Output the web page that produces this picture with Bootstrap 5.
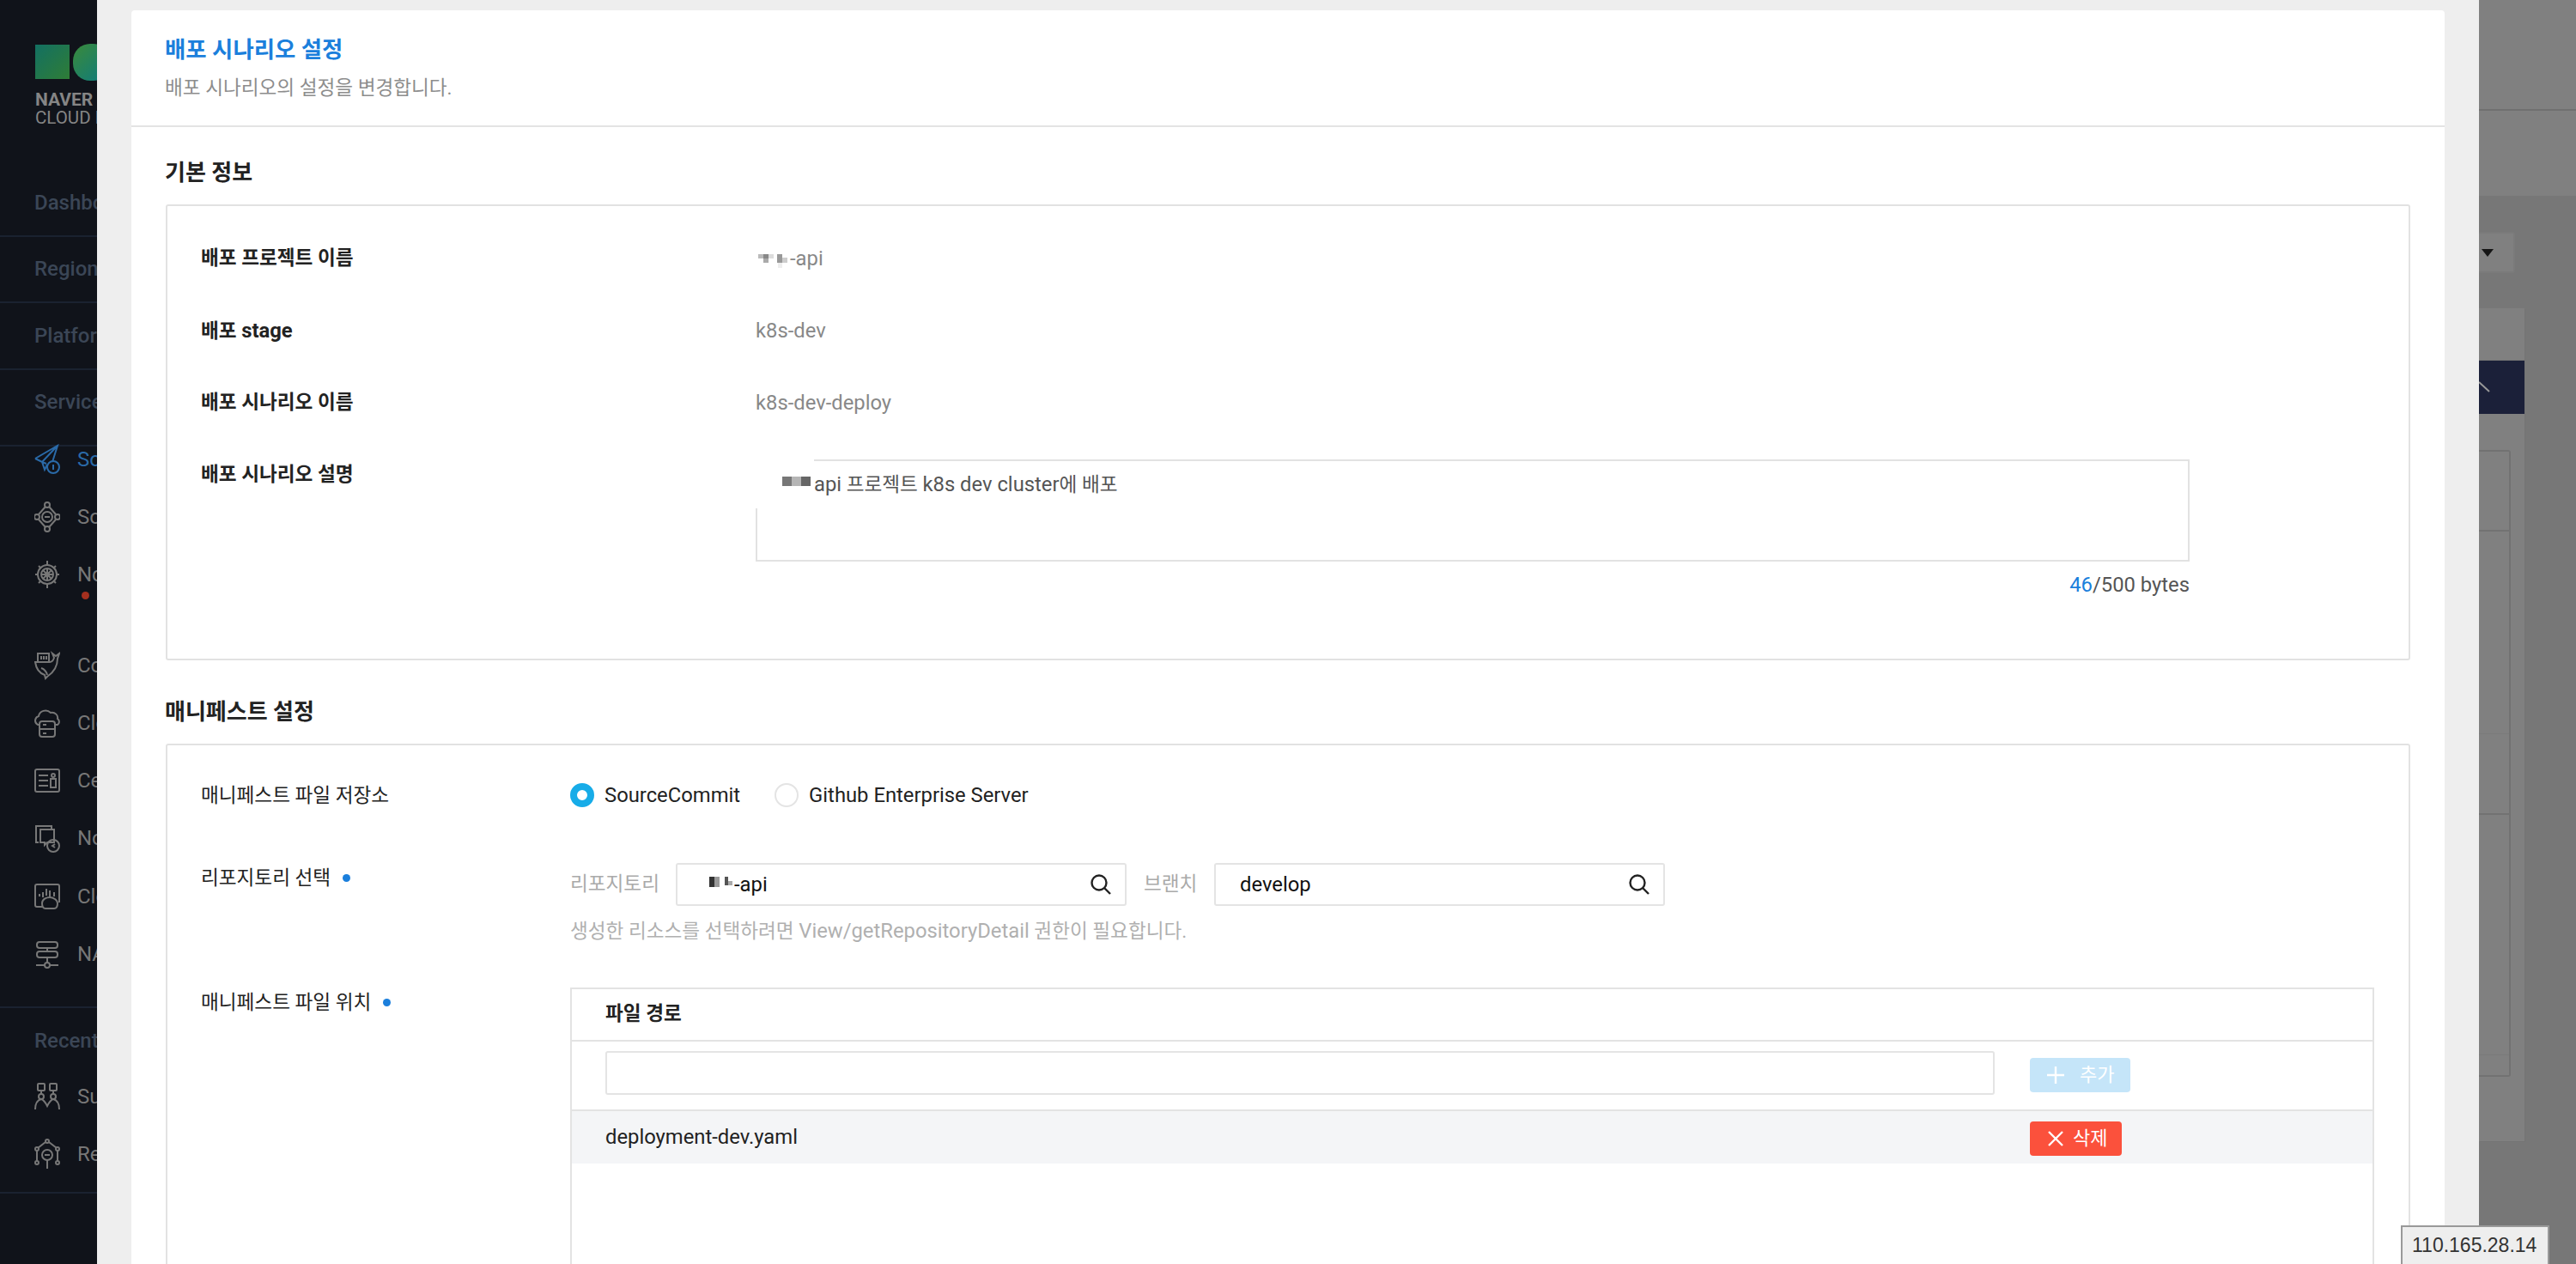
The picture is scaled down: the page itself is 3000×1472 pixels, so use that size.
<!DOCTYPE html>
<html lang="ko">
<head>
<meta charset="utf-8">
<title>배포 시나리오 설정</title>
<link href="https://cdn.jsdelivr.net/npm/bootstrap@5.3.0/dist/css/bootstrap.min.css" rel="stylesheet">
<style>
html,body{margin:0;height:1472px;overflow:hidden;background:#777}
body{font-family:Roboto,"Noto Sans CJK KR",sans-serif;font-size:22.6px;color:#222}
.en{font-size:23.8px}
.stage{height:1472px;overflow:hidden}
.side{width:113px;flex:none;background:#10131a;overflow:hidden;white-space:nowrap}
.logo-box{height:198px;padding:51px 0 0 41px}
.logo-box svg{display:block}
.logo-t{font-size:20.5px;line-height:21px;color:#858585}
.logo-t.one{font-size:21px;font-weight:700;margin-top:11px}
.sec{height:77.5px;border-bottom:2px solid #1a2230;padding-left:40px;font-size:24px;font-weight:500;color:#3b4656;display:flex;align-items:center}
.sec.nob{border:0}
.sec.tall{height:89px;padding-bottom:12px}
.sec.rec{height:76px}
.side-list{margin-top:-3px;height:657px;border-bottom:2px solid #1a2230}
.side-list.sec2{height:auto;padding-bottom:26px;margin-top:9px}
.nav-i{height:36px;margin-bottom:31.2px;padding-left:40px;display:flex;align-items:center;gap:20px;font-size:24px;color:#777;position:relative}
.nav-i svg{width:30px;height:36px;flex:none;stroke:#777;fill:none;stroke-width:2}
.nav-i.on{color:#2a6aa8}
.nav-i.on svg{stroke:#2a6aa8}
.nav-i.gap{margin-bottom:70px}
.nav-i.end{margin-bottom:0}
.red-dot{position:absolute;left:95px;top:38px;width:9px;height:9px;border-radius:50%;background:#a5301f}
.sheet{width:2774px;flex:none;background:#eee;padding:12px 40px 0}
.sheet-head{height:136px;background:#fff;border-bottom:2px solid #e4e4e4;border-radius:4px 4px 0 0;padding:31px 39px 0}
.sheet-title{font-size:26.4px;line-height:30px;font-weight:700;color:#1b7fdc;margin:0 0 15px}
.sheet-sub{line-height:30px;color:#8d8d8d;margin:0}
.sheet-body{background:#fff;height:1400px;padding:38px 40px 0}
.sec-h{font-size:26px;line-height:30px;font-weight:700;color:#222;margin:0 0 22px -1px}
.box-a{border:2px solid #e2e2e2;border-radius:3px;padding:46px 39px 71px;margin-bottom:45px}
.info-row{display:flex;margin-bottom:53.5px;line-height:30px}
.info-row.last{margin-bottom:0}
.info-k{width:646px;flex:none;font-weight:700}
.info-v{color:#888;display:flex;align-items:center}
.info-v svg{margin-top:5px}
.wide{width:1670px}
.area{height:119px;margin-top:-3px;border:2px solid #e2e2e2;padding:12px 0 0 66px;line-height:30px;color:#555;position:relative;white-space:nowrap}
.area-patch{position:absolute;left:-2px;top:-2px;width:68px;height:57px;background:#fff}
.area-txt{position:relative}
.area-txt svg{position:absolute;left:-37px;top:4px}
.count{text-align:right;margin-top:12px;color:#555}
.count b{font-weight:400;color:#1b7fdc}
.box-b{border:2px solid #e2e2e2;border-radius:3px;padding:43px 39px 0;height:1000px}
.set-row{display:flex;line-height:30px}
.set-k{width:430px;flex:none;margin-top:3px;display:flex;align-items:center;height:30px;gap:14px}
.set-k.plain{margin-top:1px}
.req{width:9px;height:9px;border-radius:50%;background:#1b7fdc}
.rd-w{display:flex;align-items:center;gap:12px;margin-right:40px}
.rd-w .form-check-input{width:28px;height:28px;margin:0;border:2px solid #e4e4e4;background-image:none;flex:none}
.rd-w .form-check-input:checked{background:#fff;border:8px solid #17ace8}
.fld{width:525px;height:50px;border:2px solid #e4e4e4;border-radius:3px;display:flex;align-items:center;justify-content:space-between;padding:0 15px 0 28px;color:#111;background:#fff}
.fld svg{flex:none}
.fld-l{color:#aaa;margin-right:20px;width:103px;flex:none;white-space:nowrap}
.fld-l.b{width:62px;margin:0 20px 0 20px}
.hint{color:#b0b0b0;line-height:30px;margin-top:14px}
.tbl{flex:none;width:2101px;border:2px solid #e3e3e3;border-bottom:0;height:700px}
.tbl-h{height:61px;border-bottom:2px solid #e3e3e3;padding-left:39px;font-weight:700;line-height:57px}
.tbl-r{display:flex;align-items:center;padding-left:39px;gap:41px}
.tbl-r.in{height:81px;border-bottom:2px solid #e3e3e3}
.tbl-r.it{height:61px;background:#f4f5f7}
.tbl-c{width:1618px;flex:none;line-height:30px}
.tbl-r.in .tbl-c{align-self:flex-start;margin-top:11px}
.tbl-c .form-control{height:51px;border:2px solid #e4e4e4;border-radius:3px}
.act{height:40px;padding:0;border:0;border-radius:4px;color:#fff;font-size:22px;display:flex;align-items:center;line-height:1}
.act.add,.act.add:hover{width:117px;background:#c5e5f9;color:#fff;gap:18px;padding-left:20px}
.act.del,.act.del:hover{width:107px;background:#fb513c;color:#fff;gap:11px;padding-left:21px;margin-top:4px}
.dim{flex:1;background:#777;min-width:0;overflow:hidden}
.dim-a{height:129px;background:#808080;border-bottom:2px solid #707070}
.dim-b{height:99px;background:#808080}
.dim-sel{width:42px;height:48px;margin-top:42px;background:#808080;border:2px solid #7a7a7a;border-left:0;border-radius:0 3px 3px 0;padding:18px 0 0 2px}
.tri{width:0;height:0;border-left:7px solid transparent;border-right:7px solid transparent;border-top:9px solid #151515;margin-left:1px}
.dim-card{width:53px;height:970px;margin-top:41px;background:#808080;box-shadow:1px 1px 0 #747474}
.dim-card-h{height:61px;border-bottom:1px solid #757575}
.dim-navy{height:62px;background:#1b2039;display:flex;align-items:center}
.dim-in{width:37px;height:730px;margin-top:42px;border:2px solid #727272;border-left:0;border-radius:0 3px 3px 0}
.dim-p{border-bottom:2px solid #727272}
.dim-p.a{height:93px}
.dim-p.b{height:236px;border-bottom:1px solid #7a7a7a}
.dim-p.c{height:94px}
.dim-p.d{height:280px;border-bottom:1px solid #7a7a7a}
.ip-tip{position:fixed;left:2796px;top:1427px;width:173px;height:60px;background:#eee;border:2px solid #999;padding:7px 0 0 11px;font-family:"Liberation Sans",Arial,sans-serif;font-size:23px;line-height:28px;color:#333}
</style>
</head>
<body>
<div class="stage d-flex">
  <aside class="side">
    <div class="logo-box">
      <svg width="72" height="44" viewBox="0 0 72 44">
        <defs>
          <linearGradient id="g1" x1="0" y1="0" x2="1" y2="1"><stop offset="0" stop-color="#137062"/><stop offset="1" stop-color="#2f7d36"/></linearGradient>
          <linearGradient id="g2" x1="0" y1="0" x2="1" y2="1"><stop offset="0" stop-color="#3a8a3a"/><stop offset="1" stop-color="#0d7a80"/></linearGradient>
        </defs>
        <rect x="0" y="1" width="40" height="40" fill="url(#g1)"/>
        <rect x="44" y="0" width="44" height="43" rx="20" fill="url(#g2)"/>
      </svg>
      <div class="logo-t one">NAVER</div>
      <div class="logo-t">CLOUD PLATFORM</div>
    </div>
    <div class="sec">Dashboard</div>
    <div class="sec">Region</div>
    <div class="sec">Platform</div>
    <div class="sec tall">Services</div>
    <div class="side-list">
      <div class="nav-i on"><svg viewBox="0 0 30 36"><path d="M1 17 27 2 21 21M1 17l8 4L27 2M9 21l3 9 3-6M9 21l5 2"/><circle cx="22" cy="27" r="7"/><path d="M22 24v6"/></svg>SourceDeploy</div>
      <div class="nav-i"><svg viewBox="0 0 30 36"><circle cx="15" cy="4" r="3"/><circle cx="27" cy="18" r="3"/><circle cx="15" cy="32" r="3"/><circle cx="3" cy="18" r="3"/><circle cx="15" cy="18" r="6"/><path d="m17 6 8 9M25 21l-8 9M13 30l-8-9M5 15l8-9M12 18h6"/></svg>SourcePipeline</div>
      <div class="nav-i gap"><svg viewBox="0 0 30 36"><circle cx="15" cy="18" r="11"/><circle cx="15" cy="18" r="7"/><circle cx="15" cy="18" r="2"/><path d="M15 2v5M15 29v5M1 18h3M26 18h3M5 8l3 3M25 8l-3 3M5 28l3-3M25 28l-3-3M15 11v14M8 18h14M10 13l10 10M20 13 10 23"/></svg>Ncloud Kubernetes Service<span class="red-dot"></span></div>
      <div class="nav-i"><svg viewBox="0 0 30 36"><path d="M4 4h13v10H4zM8 7v4M11 7v4M14 7v4"/><path d="M1 14h17c2 0 4-2 5-5l-2-5 4 3 4-3-2 6c0 10-6 17-12 21l-2 2-1-4C6 27 2 21 1 14Z"/><path d="M8 21c3 1 6 4 7 8"/></svg>Container Registry</div>
      <div class="nav-i"><svg viewBox="0 0 30 36"><path d="M5 20H4c-5-3-3-9 1-10 1-6 9-9 14-4 5-1 9 3 8 7 3 2 2 6 0 7h-2"/><rect x="6" y="16" width="18" height="18" rx="3"/><path d="M6 25h18M10 20h4M10 30h4"/></svg>Cloud Functions</div>
      <div class="nav-i"><svg viewBox="0 0 30 36"><rect x="1" y="5" width="28" height="26" rx="2"/><path d="M5 12h11M5 18h11M5 24h11"/><circle cx="22" cy="12" r="2"/><rect x="19" y="16" width="6" height="10"/></svg>Certificate Manager</div>
      <div class="nav-i"><svg viewBox="0 0 30 36"><path d="M5 23H2V4h18v4"/><path d="M7 8h16v15H15l-3 3v-3H7Z"/><circle cx="22" cy="27" r="7"/><path d="m24 25-3 2 3 2"/></svg>Notification Service</div>
      <div class="nav-i"><svg viewBox="0 0 30 36"><path d="M10 30H3a2 2 0 0 1-2-2V6a2 2 0 0 1 2-2h24a2 2 0 0 1 2 2v19"/><path d="M6 18v-3M10 19v-6M14 17V9M18 19v-8M23 18v-5"/><path d="M9 26c0-5 5-7 9-7s9 3 9 7c0 3-1 6-4 6H13c-3 0-4-3-4-6Z"/></svg>Cloud Insight</div>
      <div class="nav-i"><svg viewBox="0 0 30 36"><rect x="3" y="4" width="24" height="7" rx="3"/><rect x="3" y="15" width="24" height="7" rx="3"/><path d="M15 11v4M15 22v6M2 31h10M18 31h10"/><circle cx="15" cy="31" r="3"/></svg>NAT Gateway</div>
    </div>
    <div class="sec nob rec">Recently Viewed</div>
    <div class="side-list sec2">
      <div class="nav-i"><svg viewBox="0 0 30 36"><rect x="4" y="3" width="8" height="8" rx="1"/><rect x="18" y="3" width="8" height="8" rx="1"/><circle cx="8" cy="18" r="3"/><circle cx="22" cy="18" r="3"/><path d="M1 33c0-7 3-11 7-12 3 1 5 4 7 8 2-4 4-7 7-8 4 1 7 5 7 12"/><path d="M8 11v4M22 11v4"/></svg>Sub Account</div>
      <div class="nav-i end"><svg viewBox="0 0 30 36"><circle cx="15" cy="3" r="2"/><circle cx="3" cy="12" r="2"/><circle cx="27" cy="12" r="2"/><circle cx="3" cy="28" r="2"/><circle cx="27" cy="28" r="2"/><circle cx="15" cy="19" r="6"/><path d="M13 4 4 11M17 4l9 7M3 14v12M27 14v12M15 25v10M12 19h6"/></svg>Resource Manager</div>
    </div>
  </aside>

  <main class="sheet">
    <header class="sheet-head">
      <h1 class="sheet-title">배포 시나리오 설정</h1>
      <p class="sheet-sub">배포 시나리오의 설정을 변경합니다.</p>
    </header>
    <div class="sheet-body">
      <h2 class="sec-h">기본 정보</h2>
      <section class="box-a">
        <div class="info-row">
          <div class="info-k">배포 프로젝트 이름</div>
          <div class="info-v en"><svg width="40" height="16" viewBox="0 0 40 16"><rect x="3" y="0" width="6" height="5" fill="#bbb"/><rect x="9" y="0" width="6" height="5" fill="#888"/><rect x="15" y="0" width="6" height="5" fill="#ddd"/><rect x="9" y="5" width="6" height="5" fill="#aaa"/><rect x="25" y="0" width="6" height="10" fill="#999"/><rect x="31" y="4" width="6" height="6" fill="#ccc"/><rect x="26" y="10" width="5" height="6" fill="#eee"/></svg>-api</div>
        </div>
        <div class="info-row">
          <div class="info-k">배포 <span class="en">stage</span></div>
          <div class="info-v en">k8s-dev</div>
        </div>
        <div class="info-row">
          <div class="info-k">배포 시나리오 이름</div>
          <div class="info-v en">k8s-dev-deploy</div>
        </div>
        <div class="info-row last">
          <div class="info-k">배포 시나리오 설명</div>
          <div class="wide">
            <div class="area">
              <span class="area-patch"></span>
              <span class="area-txt"><svg width="33" height="11" viewBox="0 0 33 11"><rect width="11" height="11" fill="#777"/><rect x="11" width="11" height="11" fill="#b5b5b5"/><rect x="22" width="11" height="11" fill="#666"/></svg><span class="en">api</span> 프로젝트 <span class="en">k8s dev cluster</span>에 배포</span>
            </div>
            <div class="count en"><b>46</b>/500 bytes</div>
          </div>
        </div>
      </section>

      <h2 class="sec-h">매니페스트 설정</h2>
      <section class="box-b">
        <div class="set-row">
          <div class="set-k plain">매니페스트 파일 저장소</div>
          <div class="d-flex en">
            <label class="rd-w"><input class="form-check-input" type="radio" name="repo" checked>SourceCommit</label>
            <label class="rd-w"><input class="form-check-input" type="radio" name="repo">Github Enterprise Server</label>
          </div>
        </div>
        <div class="set-row" style="margin-top:63px">
          <div class="set-k">리포지토리 선택<span class="req"></span></div>
          <div>
            <div class="d-flex align-items-center">
              <span class="fld-l">리포지토리</span>
              <div class="fld">
                <span class="d-flex align-items-center en"><svg width="38" height="20" viewBox="0 0 38 20"><rect x="9" y="1" width="6" height="12" fill="#333"/><rect x="15" y="1" width="6" height="12" fill="#999"/><rect x="27" y="1" width="4" height="10" fill="#555"/><rect x="31" y="6" width="5" height="5" fill="#aaa"/></svg>-api</span>
                <svg width="26" height="26" viewBox="0 0 26 26" fill="none" stroke="#222" stroke-width="2.4"><circle cx="11" cy="11" r="8.5"/><path d="m17 17 7 7"/></svg>
              </div>
              <span class="fld-l b">브랜치</span>
              <div class="fld">
                <span class="en">develop</span>
                <svg width="26" height="26" viewBox="0 0 26 26" fill="none" stroke="#222" stroke-width="2.4"><circle cx="11" cy="11" r="8.5"/><path d="m17 17 7 7"/></svg>
              </div>
            </div>
            <div class="hint">생성한 리소스를 선택하려면 <span class="en">View/getRepositoryDetail</span> 권한이 필요합니다.</div>
          </div>
        </div>
        <div class="set-row" style="margin-top:50px">
          <div class="set-k">매니페스트 파일 위치<span class="req"></span></div>
          <div class="tbl">
            <div class="tbl-h">파일 경로</div>
            <div class="tbl-r in">
              <div class="tbl-c"><input class="form-control" type="text" aria-label="파일 경로"></div>
              <button class="btn act add" type="button"><svg width="20" height="20" viewBox="0 0 20 20" stroke="#fff" stroke-width="2.4"><path d="M10 0v20M0 10h20"/></svg>추가</button>
            </div>
            <div class="tbl-r it">
              <div class="tbl-c en">deployment-dev.yaml</div>
              <button class="btn act del" type="button"><svg width="18" height="18" viewBox="0 0 18 18" stroke="#fff" stroke-width="2.4"><path d="m1 1 16 16M17 1 1 17"/></svg>삭제</button>
            </div>
          </div>
        </div>
      </section>
    </div>
  </main>

  <div class="dim">
    <div class="dim-a"></div>
    <div class="dim-b"></div>
    <div class="dim-sel"><div class="tri"></div></div>
    <div class="dim-card">
      <div class="dim-card-h"></div>
      <div class="dim-navy"><svg width="14" height="14" viewBox="0 0 14 14" fill="none" stroke="#999" stroke-width="2"><path d="M0 1 12 12"/></svg></div>
      <div class="dim-in">
        <div class="dim-p a"></div>
        <div class="dim-p b"></div>
        <div class="dim-p c"></div>
        <div class="dim-p d"></div>
      </div>
    </div>
  </div>
</div>
<div class="ip-tip">110.165.28.14</div>
<script src="https://cdn.jsdelivr.net/npm/bootstrap@5.3.0/dist/js/bootstrap.bundle.min.js"></script>
</body>
</html>
